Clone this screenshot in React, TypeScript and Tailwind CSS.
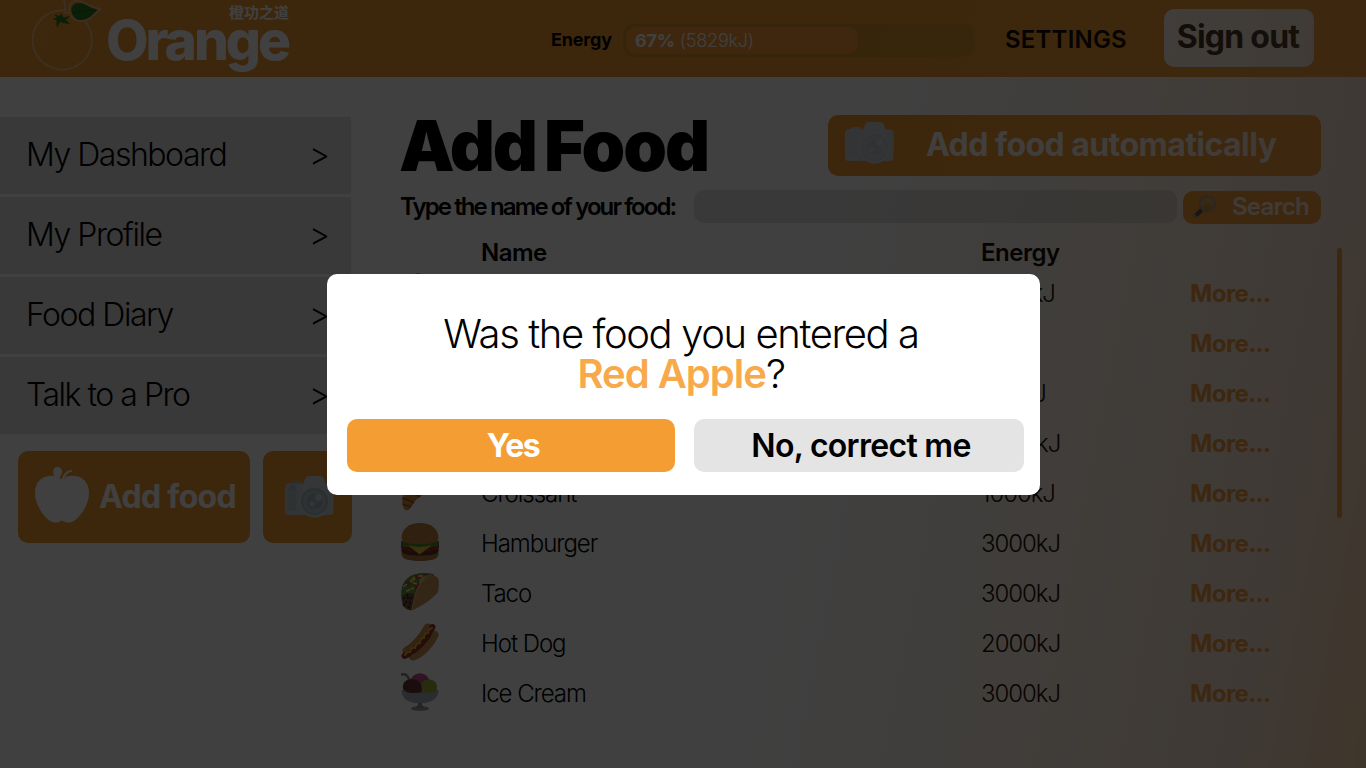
import React from "react";

function OrangeLogo() {
  return (
    <svg width="72" height="72" viewBox="0 0 72 72" className="block shrink-0" fill="none">
      <circle cx="32.300" cy="40" r="29.600" fill="#f49b32" stroke="#f3bd90" strokeWidth="1.800" />
      {[[13, 27], [17, 24], [21, 21], [9, 33], [14, 31], [19, 28], [24, 25], [7, 40], [12, 37], [17, 34], [22, 31], [10, 44], [15, 40], [20, 37], [14, 45], [19, 42], [25, 29]].map(([x, y]) => (
        <circle key={`${x}-${y}`} cx={x} cy={y} r="0.8" fill="#e3ad6c" />
      ))}
      <path d="M33.500-1c2 5 2 10 1.500 14h5c-2-5 0-10 4-12 8-2 13 6 27 8-6 3-9 13-22 12-4-1-7-3-9-6" fill="#f49b32" stroke="#f3bd90" strokeWidth="1.600" />
      <path d="M42 13c-2-5 1-10 7-10 7 0 10 5 19 7-5 3-8 10-18 10-4 0-7-3-8-7z" fill="#2b7a22" />
      <path d="M43 13c8-1 15-3 23-3" stroke="#1d641b" strokeWidth="1" />
      <path d="M31 14l2.500 4 6-1.500-4 3.500 4 4-6-1.500 0 .5-3-2-3.500 5.500 0-6.500-3.500-1 4.500-1.500-3-2.500 5 1.500z" fill="#2b7a20" stroke="#2b7a20" strokeWidth="0.8" />
    </svg>
  );
}

function Camera() {
  return (
    <svg width="49" height="42" viewBox="0 0 49 42" className="block shrink-0">
      <path d="M6 8V6q0-1 1.500-1H15q1.500 0 1.500 1.500V8z" fill="#a9b5ba" />
      <rect x="0" y="7.500" width="48.500" height="31.500" rx="4" fill="#c6cfd3" />
      <path d="M18 9l2-6q1-3 4-3h11q3 0 4 3l2 6v6H18z" fill="#cdd5d9" />
      <rect x="1.500" y="9" width="10" height="26" rx="2" fill="#bcc6cb" />
      <circle cx="8" cy="11" r="2.500" fill="#aab5bb" />
      <circle cx="29.500" cy="26" r="15.700" fill="#ccd5d9" />
      <circle cx="29.500" cy="25.500" r="13.500" fill="#adb9bf" />
      <circle cx="29.500" cy="25.500" r="11.500" fill="#bcc6cb" />
      <circle cx="29.500" cy="25.500" r="8" fill="#acb8be" />
      <circle cx="33.500" cy="21.500" r="3.200" fill="#d0d8dc" />
      <circle cx="27" cy="28" r="2.300" fill="#d0d8dc" />
    </svg>
  );
}

function FlatCamera() {
  return (
    <svg width="49" height="42" viewBox="0 0 49 42" className="block shrink-0">
      <path d="M6 8V6q0-1 1.500-1H15q1.500 0 1.500 1.500V8z" fill="#c4ccd0" />
      <rect x="0" y="7.500" width="48.500" height="31.500" rx="4" fill="#cbd2d5" />
      <path d="M18 9l2-6q1-3 4-3h11q3 0 4 3l2 6v6H18z" fill="#ced5d8" />
      <rect x="1.500" y="9" width="10" height="26" rx="2" fill="#c6ced2" />
      <circle cx="29.500" cy="26" r="15.700" fill="#ced5d8" />
      <circle cx="29.500" cy="25.500" r="13.500" fill="#c0c9cd" />
      <circle cx="29.500" cy="25.500" r="11.500" fill="#c8d0d4" />
      <circle cx="29.500" cy="25.500" r="8" fill="#c0c9cd" />
      <circle cx="34.500" cy="20.500" r="3.200" fill="#d4dade" />
      <circle cx="26.500" cy="28" r="2.300" fill="#d0d7da" />
    </svg>
  );
}

function Apple() {
  return (
    <svg width="54" height="56" viewBox="0 0 54 56" className="-mt-[5px] block shrink-0">
      <path d="M27 11.500C31 9 37 8 43 9.500 50 11.500 54 18 54 26c0 12-9 25-17 29-4 1.500-7 0-10-1.500C24 55 21 56.500 17 55 9 51 0 38 0 26 0 18 4 11.500 11 9.500c3-.8 6-1 8.500-.5C17 6 18 0 22.500 0 27 0 28 5 26 8z" fill="#fff" />
      <path d="M27 12C28 7 32 4 37 4" stroke="#f49b32" strokeWidth="5" fill="none" />
      <path d="M28 12C29 8 32 4.500 36 4" stroke="#fff" strokeWidth="2.200" strokeLinecap="round" fill="none" />
    </svg>
  );
}

function Magnifier() {
  return (
    <svg width="24" height="24" viewBox="0 0 24 24" className="block shrink-0">
      <path d="M7.500 15.500l2-2" stroke="#8a949a" strokeWidth="2.500" />
      <path d="M3 20.500L7.500 16" stroke="#3f4a50" strokeWidth="4.500" strokeLinecap="round" />
      <path d="M1.300 20l2.500 2.300" stroke="#a8b1b6" strokeWidth="1.800" />
      <circle cx="14.500" cy="9" r="7.800" fill="#d8a058" stroke="#8c979c" strokeWidth="1.700" />
      <path d="M8.500 11q6-4 12 0-1 4.500-6 4.500t-6-4.500z" fill="#c48a3c" />
    </svg>
  );
}

function Croissant() {
  return (
    <svg width="38" height="38" viewBox="0 0 38 38" className="block">
      <path d="M36 4C22 0 8 8 3 21c-3 7-2 14 2 16.500 5 0 6-6 10-10.500 5-5 13-9 21-11z" fill="#c98a3a" />
      <path d="M1 25q7 2 12 5M5 16l14 8M14 7l11 14" stroke="#8e5a20" strokeWidth="1.500" fill="none" />
      <path d="M1.500 31q4 2 8 2.500" stroke="#8e5a20" strokeWidth="1.300" fill="none" />
    </svg>
  );
}

function Hamburger() {
  return (
    <svg width="38" height="38" viewBox="0 0 38 38" className="block">
      <path d="M.5 27h37v4c0 5-7 7-18.500 7S.5 36 .5 31z" fill="#b37535" />
      <path d="M.5 24h37v4c-2 4-9 4.500-18.500 4.500S2.500 32 .5 28z" fill="#56382a" />
      <path d="M0 20h38v4.500c-3 4-10 4.500-19 4.500S3 28.500 0 24.500z" fill="#a8281f" />
      <path d="M0 18h38v3.500q-3 4-6 1.500-3 3-7 1-3 2.500-6 .5-3 2-6 0-4 1.500-6-1-4 2-7-1.500z" fill="#568b30" />
      <path d="M7 22q12 4 24 0l-3 2.500-9.500 7L10 24.500z" fill="#e2c230" />
      <path d="M.5 15C.5 6 8 0 19 0s18.500 6 18.500 15c0 4-6 6-18.500 6S.5 19 .5 15z" fill="#bb8042" />
      {[[8, 8], [12, 5], [17, 4], [22, 3], [27, 6], [31, 9], [15, 9], [21, 8], [26, 11], [10, 13]].map(([x, y]) => (
        <circle key={`${x}-${y}`} cx={x} cy={y} r="0.6" fill="#dcae6c" />
      ))}
    </svg>
  );
}

function Taco() {
  return (
    <svg width="38" height="38" viewBox="0 0 38 38" className="block">
      <path d="M1 14C4 5 12 0 21 .5 28 0 32 1 33 2L13 36c-4 3-9 0-11-4-2-6-2-12-1-18z" fill="#76543a" />
      <path d="M1 15C4 5 13 0 24 0l5 1-15 20-6-1-7 3z" fill="#5a9a3a" />
      <path d="M4 11l5-5 3 3-5 4zM13 4l5-3 2 3-4 3zM12 13l5-4 2 4-4 4zM22 2l4-1-1 3-3 1z" fill="#c93a4c" />
      <path d="M8 8l5-5 2 3-5 4zM19 6l6-4-2 5-5 4zM8 16l6-3-2 4z" fill="#e6d23c" />
      <path d="M2 14l4-3M12 10l4 1M17 3l5 0M5 18l4-1" stroke="#f2ead0" strokeWidth="1.500" />
      {[[3, 25], [7, 25], [5, 29], [9, 30], [3, 32], [8, 34], [10, 25], [6, 22]].map(([x, y]) => (
        <circle key={`${x}-${y}`} cx={x} cy={y} r="1.400" fill="#432a22" />
      ))}
      <path d="M11 37.500C13 27 15 14 23 6c5-5 9-5 14-1 1.500 4 1 8 0 14-7 8-16 14-26 18.500z" fill="#c9965a" />
      <path d="M11 37C13 27 15 14 23 6c3-3 5-4 8-4" stroke="#dcb884" strokeWidth="1.200" fill="none" />
      {[[25, 12], [29, 9], [33, 12], [27, 18], [21, 22], [32, 17], [22, 27], [17, 30]].map(([x, y]) => (
        <circle key={`${x}-${y}`} cx={x} cy={y} r="0.6" fill="#ad7638" />
      ))}
    </svg>
  );
}

function HotDog() {
  return (
    <svg width="38" height="38" viewBox="0 0 38 38" className="block" fill="none" strokeLinecap="round">
      <path d="M6 28C12 25 22 15 27 5" stroke="#c98e48" strokeWidth="9" />
      <path d="M12 33C20 30 29 21 33 12" stroke="#c08844" strokeWidth="9" />
      <path d="M3.500 33C14 28 27 16 31.500 4" stroke="#96302c" strokeWidth="6" />
      <path d="M13 34C21 31 31 21 34 11" stroke="#cb9450" strokeWidth="6" />
      <path d="M4 32q2-4 5-3 1-5 5-4 1-5 5-5 0-5 4-5 0-5 4-5 0-4 4-5" stroke="#e6b92e" strokeWidth="1.900" />
    </svg>
  );
}

function IceCream() {
  return (
    <svg width="38" height="38" viewBox="0 0 38 38" className="block">
      <path d="M0 1.500c5-1 7 1 9 7" stroke="#78868b" strokeWidth="2.500" fill="none" />
      <ellipse cx="19" cy="35.500" rx="9" ry="2.300" fill="#929ca2" />
      <path d="M16 28h6l-1 4 3 3H14l3-3z" fill="#86929a" />
      <path d="M.5 17h37c0 9-7 12-14 13h-9C7 29 .5 26 .5 17z" fill="#a9b0ba" />
      <circle cx="19" cy="10" r="9.800" fill="#c2508f" />
      <path d="M20 19c-1-8 2-12.500 8-12.500s8.500 4.500 8 9-7 5-16 3.500z" fill="#9cb03a" />
      <path d="M2 16C1 9.500 5 6 11 6s11 5 9.500 13c-6 2-16 1.500-18.500-3z" fill="#6c3434" />
    </svg>
  );
}

function Banana() {
  return (
    <svg width="38" height="38" viewBox="0 0 38 38" className="block">
      <path d="M15 0h4c3 8 3 15 9 21s9 9 8 13C19 41 5 25 15 0z" fill="#d6ad32" />
    </svg>
  );
}

const menu = ["My Dashboard", "My Profile", "Food Diary", "Talk to a Pro"];

const foods = [
  { name: "", energy: "1000kJ", icon: <Banana /> },
  { name: "", energy: "", icon: null },
  { name: "", energy: "500kJ", icon: null },
  { name: "", energy: "2000kJ", icon: null },
  { name: "Croissant", energy: "1000kJ", icon: <Croissant /> },
  { name: "Hamburger", energy: "3000kJ", icon: <Hamburger /> },
  { name: "Taco", energy: "3000kJ", icon: <Taco /> },
  { name: "Hot Dog", energy: "2000kJ", icon: <HotDog /> },
  { name: "Ice Cream", energy: "3000kJ", icon: <IceCream /> },
];

function Header() {
  return (
    <header className="flex h-[77px] bg-[#f49b32] pl-[30px]">
      <OrangeLogo />
      <div className="ml-1 flex w-[183px] flex-col">
        <div className="h-6 self-end text-[15px] leading-[23px] font-bold whitespace-nowrap text-white font-['Noto_Sans_CJK_SC',sans-serif]">橙功之道</div>
        <div className="h-8 text-[55px] leading-[32px] font-extrabold tracking-[-3px] text-white">Orange</div>
      </div>
      <div className="ml-[262px] w-[72px] text-[18px] leading-[80px] font-bold tracking-[-0.2px]">Energy</div>
      <div className="mt-6 h-[33px] w-[351px] rounded-[10px] bg-[#d9942f] p-[3px]">
        <div className="flex h-[27px] w-[232px] items-center rounded-[10px] bg-[#f89d38] pl-[9px] text-[18px] font-light tracking-[-0.2px] whitespace-pre text-white">
          <b className="font-bold">67%</b> (5829kJ)
        </div>
      </div>
      <div className="ml-[31px] w-[159px] text-[24px] leading-[80px] font-semibold tracking-[0.2px]">SETTINGS</div>
      <button className="mt-[9px] h-[58px] w-[150px] rounded-[10px] bg-white pr-[2px] pb-[2px] text-[32px] leading-[56px] font-bold tracking-[-0.75px] whitespace-nowrap text-[#28221d]">Sign out</button>
    </header>
  );
}

function Sidebar() {
  return (
    <aside className="w-[352px] shrink-0 pt-10">
      <nav className="flex w-[351px] flex-col gap-[3px]">
        {menu.map((item) => (
          <a key={item} className="flex h-[77px] justify-between bg-[#e2e2e2] pr-[21px] pl-[26px] text-[32px] leading-[75px] font-light">
            <span className="tracking-[-1.48px]">{item}</span>
            <span>&gt;</span>
          </a>
        ))}
      </nav>
      <div className="mt-[17px] flex gap-[13px] pl-[18px]">
        <button className="flex h-[92px] w-[232px] items-center rounded-[10px] bg-[#f49b32] pl-[17px] text-white">
          <Apple />
          <span className="ml-2.5 pb-px text-[32px] font-bold tracking-[-0.7px] whitespace-nowrap">Add food</span>
        </button>
        <button className="flex h-[92px] w-[89px] items-center rounded-[10px] bg-[#f49b32] pl-[22px]">
          <Camera />
        </button>
      </div>
    </aside>
  );
}

function FoodPanel() {
  return (
    <section className="ml-[49px] w-[920px] shrink-0 pt-[38px]">
      <div className="flex h-[61px] items-center">
        <h1 className="-ml-[2px] w-[429px] text-[70px] leading-[61px] font-black tracking-[-2px] [word-spacing:-4px] whitespace-nowrap">Add Food</h1>
        <button className="flex h-[61px] w-[493px] rounded-[10px] bg-[#f49b32] pt-[7px] pl-[17px] text-white">
          <FlatCamera />
          <span className="ml-[32px] text-[32px] leading-[45px] font-bold tracking-[-0.55px] whitespace-nowrap">Add food automatically</span>
        </button>
      </div>
      <div className="mt-[14px] flex h-[34px]">
        <label className="-ml-px w-[294px] text-[24px] leading-[34px] font-semibold tracking-[-1.9px] whitespace-nowrap">Type the name of your food:</label>
        <div className="h-[33px] w-[483px] rounded-[10px] bg-[#e2e2e2]" />
        <button className="mt-px ml-1.5 flex h-[33px] w-[138px] rounded-[10px] bg-[#f49b32] pt-1 pl-[10px] text-white">
          <Magnifier />
          <span className="ml-[15px] text-[24px] leading-[24px] font-semibold tracking-[-0.75px]">Search</span>
        </button>
      </div>
      <div className="mt-[14px] flex h-[30px] items-center pl-20 text-[24px] font-semibold tracking-[-0.5px]">
        <span className="w-[500px]">Name</span>
        <span>Energy</span>
      </div>
      {foods.map((food, i) => (
        <div key={i} className="flex h-[50px] items-center text-[24px] font-light">
          <div className="w-20 pb-[3px]">{food.icon}</div>
          <span className="w-[500px] pt-px tracking-[-1.05px]">{food.name}</span>
          <span className="w-[209px] pt-px tracking-[-1.05px]">{food.energy}</span>
          <span className="pt-[2px] font-bold tracking-[-0.6px] text-[#f49b32]">More...</span>
        </div>
      ))}
    </section>
  );
}

function ConfirmDialog() {
  return (
    <div role="dialog" className="mt-[274px] ml-[327px] h-[221px] w-[713px] rounded-[10px] bg-white pt-10">
      <p className="w-[708px] text-center text-[40px] leading-10 font-light tracking-[-1.4px]">
        Was the food you entered a
        <br />
        <b className="font-semibold tracking-[-1px] text-[#f8a94a]">Red Apple</b>?
      </p>
      <div className="mt-[25px] flex gap-[19px] pl-5">
        <button className="h-[53px] w-[328px] rounded-[10px] bg-[#f49d33] pl-1 text-[32px] leading-[54px] font-bold tracking-[-1.5px] text-white">Yes</button>
        <button className="h-[53px] w-[330px] rounded-[10px] bg-[#e4e4e4] pl-1 text-[32px] leading-[52px] font-semibold tracking-[-0.7px] text-black">No, correct me</button>
      </div>
    </div>
  );
}

export default function App() {
  return (
    <div className="relative h-[768px] w-[1366px] overflow-hidden bg-white text-black font-['Inter',sans-serif]">
      <Header />
      <main className="flex">
        <Sidebar />
        <FoodPanel />
        <div className="mt-[171px] ml-4 h-[270px] w-[5px] rounded-full bg-[#f49b32]" />
      </main>
      <div className="absolute inset-0 bg-[linear-gradient(101deg,rgba(244,170,80,0)_58%,rgba(244,165,75,0.16)_80%,rgba(246,160,100,0.3)_92%,rgba(244,158,51,0.42)_100%)]" />
      <div className="absolute inset-0 bg-black/75">
        <ConfirmDialog />
      </div>
    </div>
  );
}
